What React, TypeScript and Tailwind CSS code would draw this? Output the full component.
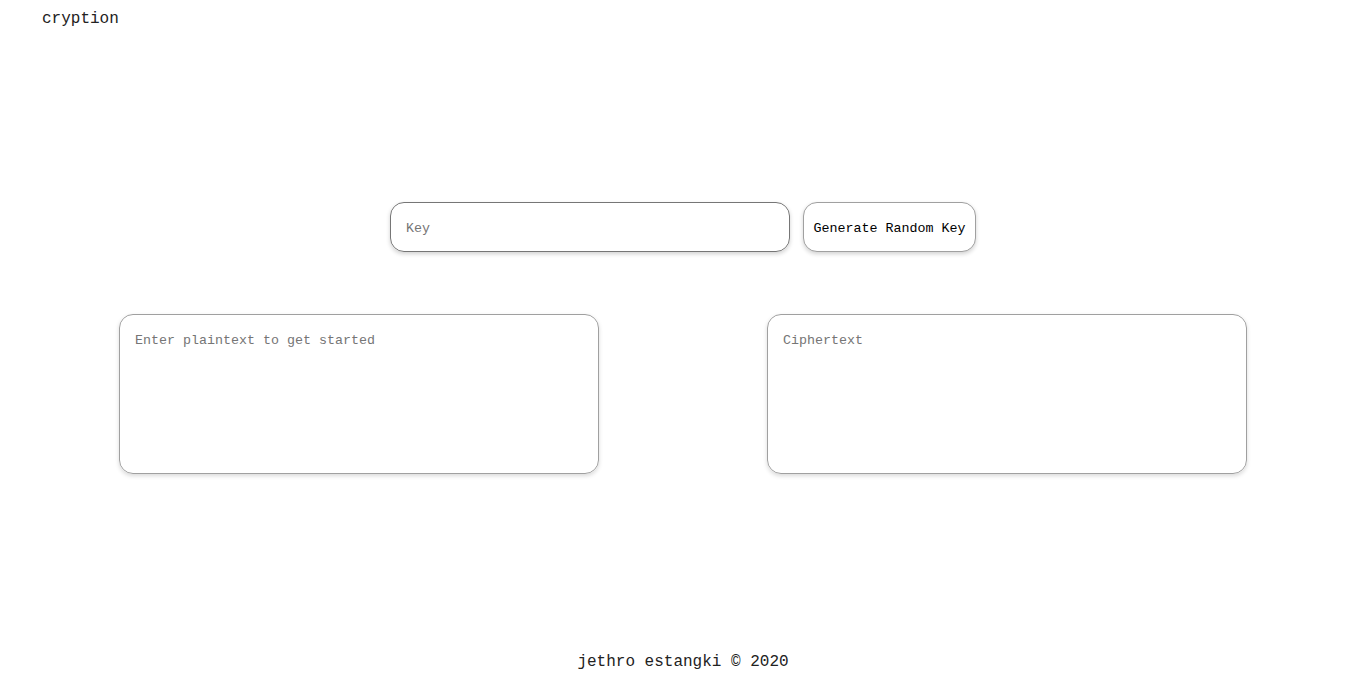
export default function App() {
  return (
    <div className="flex h-[676px] flex-col bg-white font-['Liberation_Mono',monospace] text-[#222]">
      <header className="px-[42px] pt-[7px] text-base leading-6">cryption</header>

      <section className="mt-[171px] flex justify-center gap-[13px]">
        <input
          type="text"
          placeholder="Key"
          className="h-[50px] w-[400px] rounded-[14px] border border-[#767676] px-[15px] pt-[2px] text-[13.33px] text-black shadow-[0_2px_4px_rgba(0,0,0,0.18)] outline-none placeholder:text-[#757575]"
        />
        <button className="h-[50px] w-[173px] rounded-[14px] border border-[#a0a0a0] bg-white pt-[3px] text-[13.33px] text-black shadow-[0_2px_4px_rgba(0,0,0,0.18)]">
          Generate Random Key
        </button>
      </section>

      <section className="mt-[62px] flex justify-center gap-[168px]">
        <textarea
          placeholder="Enter plaintext to get started"
          className="h-[160px] w-[480px] resize-none rounded-[14px] border border-[#a0a0a0] px-[15px] py-[18px] text-[13.33px] leading-4 shadow-[0_2px_4px_rgba(0,0,0,0.15)] outline-none placeholder:text-[#757575]"
        />
        <textarea
          placeholder="Ciphertext"
          readOnly
          className="h-[160px] w-[480px] resize-none rounded-[14px] border border-[#a0a0a0] px-[15px] py-[18px] text-[13.33px] leading-4 shadow-[0_2px_4px_rgba(0,0,0,0.15)] outline-none placeholder:text-[#757575]"
        />
      </section>

      <footer className="mt-auto pb-[2px] text-center text-base leading-6">
        jethro estangki © 2020
      </footer>
    </div>
  );
}
